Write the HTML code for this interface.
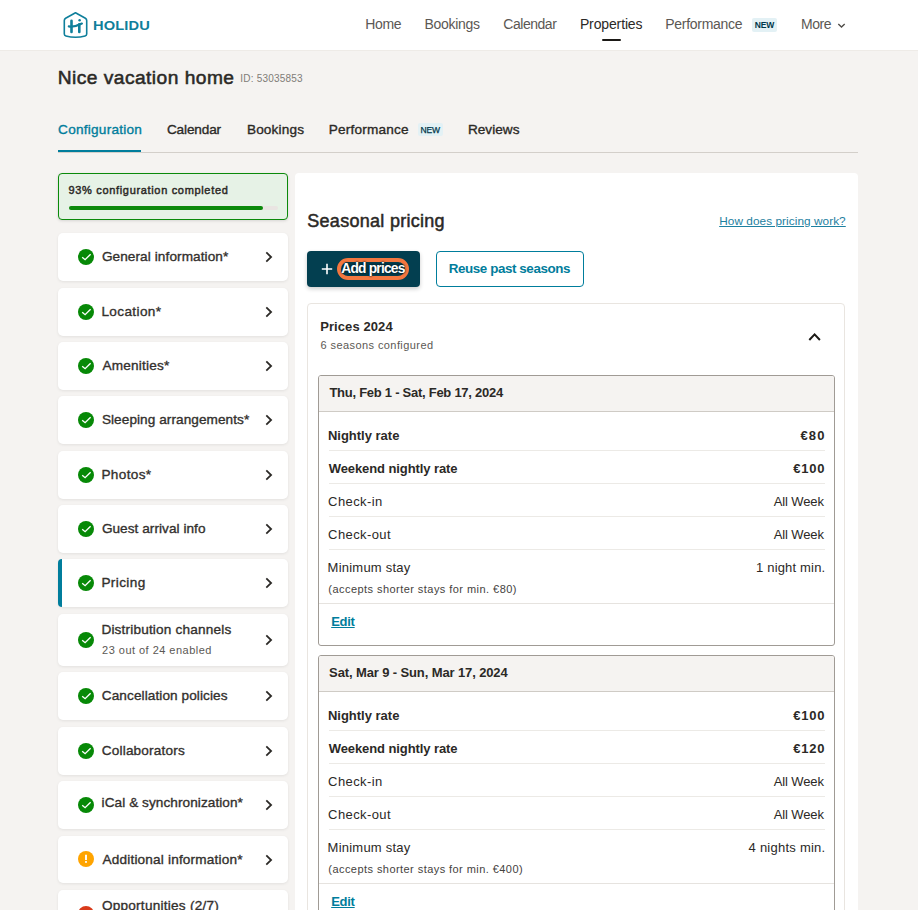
<!DOCTYPE html>
<html lang="en">
<head>
<meta charset="utf-8">
<title>Nice vacation home - Pricing</title>
<style>
*{box-sizing:border-box;margin:0;padding:0}
html,body{width:918px;height:910px;overflow:hidden}
body{background:#f5f3f1;font-family:"Liberation Sans",sans-serif;color:#2b2926;position:relative;font-size:14px}
a{color:inherit}
.abs{position:absolute;white-space:nowrap}
.md{font-weight:normal;-webkit-text-stroke:.35px currentColor;font-size:13.6px!important}
#hdr{position:absolute;left:0;top:0;width:918px;height:51px;background:#fff;border-bottom:1px solid #eeebe7}
.nav{position:absolute;top:16px;font-size:14px;line-height:16px;color:#5b5854;white-space:nowrap}
.nav.act{color:#2b2926}
.badge{position:absolute;font-size:8.5px;font-weight:bold;background:#e3f1f5;color:#00374a;border-radius:2px;text-align:center;white-space:nowrap}
#title{left:58.5px;top:66px;font-size:19.2px;line-height:24px;-webkit-text-stroke:.55px currentColor}
#pid{left:241px;top:72.5px;font-size:10px;line-height:12px;color:#807c77}
.tab{position:absolute;top:122px;font-size:14px;line-height:16px;white-space:nowrap}
#tabline{position:absolute;left:58px;top:152px;width:800px;height:1px;background:#d3cfca}
#tabact{position:absolute;left:58px;top:150px;width:83px;height:2px;background:#007d9c}
#prog{position:absolute;left:58px;top:173px;width:230px;height:47px;border:1px solid #0a8a0a;border-radius:4px;background:#e6f2e6;box-shadow:0 1px 3px rgba(0,0,0,.12)}
#prog .t{position:absolute;left:10px;top:9px;font-size:11px;line-height:14px;-webkit-text-stroke:.45px currentColor;color:#2b2926;white-space:nowrap}
#prog .bar{position:absolute;left:10px;top:32px;width:209px;height:4px;border-radius:2px;background:#e9e5e2}
#prog .bar i{display:block;width:194px;height:4px;border-radius:2px;background:#0a8a0a}
.it{position:absolute;left:58px;width:230px;background:#fff;border-radius:5px;box-shadow:0 1px 3px rgba(0,0,0,.08)}
.it .ic{position:absolute;left:20px;width:16px;height:16px}
.it .lb{position:absolute;left:44.5px;font-size:14px;line-height:16px;white-space:nowrap;color:#33302d}
.it .sb{position:absolute;left:44.5px;font-size:11px;line-height:14px;white-space:nowrap;color:#5b5854}
.it .ch{position:absolute;left:206.5px;width:8px;height:12px}
#main{position:absolute;left:295px;top:173px;width:563px;height:760px;background:#fff;border-radius:4px}
#h2{left:308px;top:210px;font-size:18px;line-height:22px;-webkit-text-stroke:.5px currentColor}
#how{left:720px;top:214px;font-size:11.8px;line-height:14px;color:#1d80a0;text-decoration:underline}
#btn1{position:absolute;left:307px;top:251px;width:113px;height:36px;border-radius:4px;background:#033f50;box-shadow:0 2px 4px rgba(0,0,0,.2)}
#btn1 svg{position:absolute;left:14.3px;top:11.5px}
#pill{position:absolute;left:30px;top:7px;width:72px;height:22px;border:4px solid #f4773f;border-radius:11px;background:#033b4b}
#btn1 .t{position:absolute;left:34.5px;top:10px;font-size:13.8px;line-height:16px;font-weight:bold;color:#fff;white-space:nowrap;text-shadow:0 0 2px #001a24,0 0 2px #001a24}
#btn2{position:absolute;left:436px;top:251px;width:148px;height:36px;border-radius:4px;background:#fff;border:1px solid #007d9c}
#btn2 .t{position:absolute;left:13px;top:9px;font-size:13.4px;line-height:16px;font-weight:bold;color:#007d9c;white-space:nowrap}
#card{position:absolute;left:307px;top:303px;width:538px;height:700px;border:1px solid #e9e5e0;border-radius:4px;background:#fff}
#ct{left:321px;top:319px;font-size:13px;line-height:16px;font-weight:bold}
#cs{left:321px;top:338px;font-size:11px;line-height:14px;color:#5b5854}
#cchev{position:absolute;left:807px;top:331px}
.sc{position:absolute;left:318px;width:517px;height:271px;border:1px solid #a09b95;border-radius:3px;background:#fff;overflow:hidden}
.sc .hd{position:absolute;left:0;top:0;width:515px;height:36px;background:#f5f3f1;border-bottom:1px solid #cfcbc5}
.sc .dt{position:absolute;left:10.5px;top:9px;font-size:13px;line-height:16px;font-weight:bold;white-space:nowrap}
.sc .l{position:absolute;left:9.7px;font-size:13px;line-height:16px;white-space:nowrap}
.sc .r{position:absolute;right:9.5px;font-size:13px;line-height:16px;white-space:nowrap;text-align:right}
.sc .b{font-weight:bold}
.sc .n{position:absolute;left:9.7px;font-size:11px;line-height:14px;white-space:nowrap;color:#45423e}
.sc .dv{position:absolute;left:9.7px;width:496px;height:1px;background:#eceae6}
.sc .fd{position:absolute;left:0;width:515px;height:1px;background:#e6e3df;top:227px}
.sc .ed{position:absolute;left:13px;top:238px;font-size:13px;line-height:16px;font-weight:bold;color:#007d9c;text-decoration:underline;white-space:nowrap}

#n1{letter-spacing:-0.34px;left:365.3px!important}
#n2{letter-spacing:-0.30px;left:424.5px!important}
#n3{letter-spacing:-0.47px;left:503.3px!important}
#n4{letter-spacing:-0.13px;left:579.9px!important}
#n5{letter-spacing:-0.27px;left:665.2px!important}
#n6{letter-spacing:-0.39px;left:800.9px!important}
#b1{letter-spacing:-0.20px;margin-right:0.20px}
#b2{letter-spacing:-0.06px;margin-right:0.06px}
#title{letter-spacing:0.46px;left:57.7px!important}
#pid{letter-spacing:0.21px;left:240.3px!important}
#t1{letter-spacing:0.24px;left:58.1px!important}
#t2{letter-spacing:-0.13px;left:166.9px!important}
#t3{letter-spacing:0.17px;left:246.9px!important}
#t4{letter-spacing:0.20px;left:328.7px!important}
#t5{letter-spacing:0.03px;left:467.9px!important}
#pt{letter-spacing:0.67px;left:9.5px!important}
#l0{letter-spacing:0.09px;left:43.9px!important}
#l1{letter-spacing:0.37px;left:43.4px!important}
#l2{letter-spacing:0.21px;left:44.5px!important}
#l3{letter-spacing:0.07px;left:43.9px!important}
#l4{letter-spacing:0.35px;left:43.4px!important}
#l5{letter-spacing:0.05px;left:43.9px!important}
#l6{letter-spacing:0.39px;left:43.4px!important}
#l7{letter-spacing:0.18px;left:43.4px!important}
#l8{letter-spacing:0.09px;left:43.8px!important}
#l9{letter-spacing:0.17px;left:43.8px!important}
#l10{letter-spacing:0.07px;left:43.6px!important}
#l11{letter-spacing:0.18px;left:44.5px!important}
#l12{letter-spacing:0.24px;left:43.9px!important}
#s7{letter-spacing:0.47px;left:44.1px!important}
#h2{letter-spacing:0.28px;left:307.3px!important}
#how{letter-spacing:0.06px;left:719.2px!important}
#apt{letter-spacing:-0.81px;left:34.3px!important}
#rpt{letter-spacing:-0.42px;left:11.8px!important}
#ct{letter-spacing:0.09px;left:320.2px!important}
#cs{letter-spacing:0.42px;left:320.5px!important}
#dt0{letter-spacing:-0.26px;left:10.4px!important}
#dt1{letter-spacing:-0.12px;left:10.1px!important}
#a0{letter-spacing:0.00px;left:8.9px!important}
#a1{letter-spacing:0.00px;left:8.9px!important}
#w0{letter-spacing:-0.09px;left:9.7px!important}
#w1{letter-spacing:-0.09px;left:9.7px!important}
#ci0{letter-spacing:0.40px;left:9.1px!important}
#ci1{letter-spacing:0.40px;left:9.1px!important}
#co0{letter-spacing:0.40px;left:9.1px!important}
#co1{letter-spacing:0.40px;left:9.1px!important}
#ms0{letter-spacing:0.23px;left:8.6px!important}
#ms1{letter-spacing:0.23px;left:8.6px!important}
#nt0{letter-spacing:0.45px;left:9.3px!important}
#nt1{letter-spacing:0.44px;left:9.3px!important}
#ed0{letter-spacing:-0.27px;left:12.2px!important}
#ed1{letter-spacing:-0.27px;left:12.2px!important}
#nv0{letter-spacing:1.20px;right:8.3px!important}
#wv0{letter-spacing:0.74px;right:8.8px!important}
#civ0{letter-spacing:-0.13px;right:10.2px!important}
#cov0{letter-spacing:-0.13px;right:10.2px!important}
#msv0{letter-spacing:0.18px;right:8.6px!important}
#nv1{letter-spacing:0.74px;right:8.8px!important}
#wv1{letter-spacing:0.74px;right:8.8px!important}
#civ1{letter-spacing:-0.13px;right:10.2px!important}
#cov1{letter-spacing:-0.13px;right:10.2px!important}
#msv1{letter-spacing:0.24px;right:8.6px!important}
</style>
</head>
<body>
<div id="hdr">
<svg class="abs" style="left:62px;top:10px" width="28" height="30" viewBox="0 0 28 30" fill="none" stroke="#0f7f9b" stroke-width="1.6" stroke-linejoin="round" stroke-linecap="round">
<path d="M13.5 2.7 L3.6 8.2 Q2.3 9 2.3 10.4 V24 Q2.3 25.6 3.9 26 Q13.5 28.4 23.1 26 Q24.7 25.6 24.7 24 V10.4 Q24.7 9 23.4 8.2 Z"/>
<path d="M9.5 10.8 V22 M17.3 14.2 V22" stroke-width="2.6"/>
<path d="M6.8 16.4 Q12.5 17.4 19.9 13.6" stroke-width="2.2"/>
<circle cx="17.6" cy="10.2" r="1.25" fill="#0f7f9b" stroke="none"/>
</svg>
<span class="abs" id="logot" style="left:93px;top:18px;font-size:12.6px;line-height:16px;font-weight:bold;color:#0f7f9b;letter-spacing:.1px;transform-origin:0 50%;transform:scaleX(1.165)">HOLIDU</span>
<span class="nav" id="n1" style="left:366.4px">Home</span>
<span class="nav" id="n2" style="left:425.4px">Bookings</span>
<span class="nav" id="n3" style="left:503.6px">Calendar</span>
<span class="nav act" id="n4" style="left:580.5px">Properties</span>
<span class="nav" id="n5" style="left:666px">Performance</span>
<span class="badge" style="left:752px;top:18px;height:13.5px;line-height:15.5px;width:25px"><span id="b1">NEW</span></span>
<span class="nav" id="n6" style="left:801.5px">More</span>
<svg class="abs" style="left:837px;top:22px" width="9" height="7" viewBox="0 0 9 7" fill="none" stroke="#4f4c48" stroke-width="1.35"><path d="M1.3 1.9 L4.5 5 L7.7 1.9"/></svg>
<div class="abs" style="left:602px;top:38.5px;width:18.5px;height:2px;background:#1b1916;border-radius:1px"></div>
</div>
<div class="abs" id="title">Nice vacation home</div>
<div class="abs" id="pid">ID: 53035853</div>
<span class="tab md" id="t1" style="left:58.5px;color:#007d9c">Configuration</span>
<span class="tab md" id="t2" style="left:167.3px">Calendar</span>
<span class="tab md" id="t3" style="left:247.6px">Bookings</span>
<span class="tab md" id="t4" style="left:329.3px">Performance</span>
<span class="badge" style="left:418px;top:123px;height:13px;line-height:15px;width:24.5px;font-weight:normal;-webkit-text-stroke:.25px currentColor"><span id="b2">NEW</span></span>
<span class="tab md" id="t5" style="left:468.6px">Reviews</span>
<div id="tabline"></div>
<div id="tabact"></div>
<div id="prog"><div class="t" id="pt">93% configuration completed</div><div class="bar"><i></i></div></div>
<div class="it" style="top:233px;height:48px"><svg class="ic" style="top:16px" viewBox="0 0 16 16"><circle cx="8" cy="8" r="8" fill="#078907"/><path d="M4.2 8.2 L7.1 10.7 L12.6 5.2" fill="none" stroke="#fff" stroke-width="1.35"/></svg><div class="lb md" id="l0" style="top:16px">General information*</div><svg class="ch" style="top:18.2px" viewBox="0 0 8 12" fill="none" stroke="#2b2926" stroke-width="1.75"><path d="M1.3 1.4 L6.1 6 L1.3 10.6"/></svg></div>
<div class="it" style="top:288px;height:48px"><svg class="ic" style="top:16px" viewBox="0 0 16 16"><circle cx="8" cy="8" r="8" fill="#078907"/><path d="M4.2 8.2 L7.1 10.7 L12.6 5.2" fill="none" stroke="#fff" stroke-width="1.35"/></svg><div class="lb md" id="l1" style="top:16px">Location*</div><svg class="ch" style="top:18.2px" viewBox="0 0 8 12" fill="none" stroke="#2b2926" stroke-width="1.75"><path d="M1.3 1.4 L6.1 6 L1.3 10.6"/></svg></div>
<div class="it" style="top:342px;height:48px"><svg class="ic" style="top:16px" viewBox="0 0 16 16"><circle cx="8" cy="8" r="8" fill="#078907"/><path d="M4.2 8.2 L7.1 10.7 L12.6 5.2" fill="none" stroke="#fff" stroke-width="1.35"/></svg><div class="lb md" id="l2" style="top:16px">Amenities*</div><svg class="ch" style="top:18.2px" viewBox="0 0 8 12" fill="none" stroke="#2b2926" stroke-width="1.75"><path d="M1.3 1.4 L6.1 6 L1.3 10.6"/></svg></div>
<div class="it" style="top:396px;height:48px"><svg class="ic" style="top:16px" viewBox="0 0 16 16"><circle cx="8" cy="8" r="8" fill="#078907"/><path d="M4.2 8.2 L7.1 10.7 L12.6 5.2" fill="none" stroke="#fff" stroke-width="1.35"/></svg><div class="lb md" id="l3" style="top:16px">Sleeping arrangements*</div><svg class="ch" style="top:18.4px" viewBox="0 0 8 12" fill="none" stroke="#2b2926" stroke-width="1.75"><path d="M1.3 1.4 L6.1 6 L1.3 10.6"/></svg></div>
<div class="it" style="top:451px;height:48px"><svg class="ic" style="top:16px" viewBox="0 0 16 16"><circle cx="8" cy="8" r="8" fill="#078907"/><path d="M4.2 8.2 L7.1 10.7 L12.6 5.2" fill="none" stroke="#fff" stroke-width="1.35"/></svg><div class="lb md" id="l4" style="top:16px">Photos*</div><svg class="ch" style="top:18.2px" viewBox="0 0 8 12" fill="none" stroke="#2b2926" stroke-width="1.75"><path d="M1.3 1.4 L6.1 6 L1.3 10.6"/></svg></div>
<div class="it" style="top:505px;height:48px"><svg class="ic" style="top:16px" viewBox="0 0 16 16"><circle cx="8" cy="8" r="8" fill="#078907"/><path d="M4.2 8.2 L7.1 10.7 L12.6 5.2" fill="none" stroke="#fff" stroke-width="1.35"/></svg><div class="lb md" id="l5" style="top:16px">Guest arrival info</div><svg class="ch" style="top:18.2px" viewBox="0 0 8 12" fill="none" stroke="#2b2926" stroke-width="1.75"><path d="M1.3 1.4 L6.1 6 L1.3 10.6"/></svg></div>
<div class="it" style="top:559px;height:48px"><div style="position:absolute;left:0;top:0;width:4px;height:100%;background:#007d9c;border-radius:5px 0 0 5px"></div><svg class="ic" style="top:16px" viewBox="0 0 16 16"><circle cx="8" cy="8" r="8" fill="#078907"/><path d="M4.2 8.2 L7.1 10.7 L12.6 5.2" fill="none" stroke="#fff" stroke-width="1.35"/></svg><div class="lb md" id="l6" style="top:16px">Pricing</div><svg class="ch" style="top:18.3px" viewBox="0 0 8 12" fill="none" stroke="#2b2926" stroke-width="1.75"><path d="M1.3 1.4 L6.1 6 L1.3 10.6"/></svg></div>
<div class="it" style="top:614px;height:52px"><svg class="ic" style="top:18px" viewBox="0 0 16 16"><circle cx="8" cy="8" r="8" fill="#078907"/><path d="M4.2 8.2 L7.1 10.7 L12.6 5.2" fill="none" stroke="#fff" stroke-width="1.35"/></svg><div class="lb md" id="l7" style="top:8px">Distribution channels</div><div class="sb" id="s7" style="top:29px">23 out of 24 enabled</div><svg class="ch" style="top:20.1px" viewBox="0 0 8 12" fill="none" stroke="#2b2926" stroke-width="1.75"><path d="M1.3 1.4 L6.1 6 L1.3 10.6"/></svg></div>
<div class="it" style="top:672px;height:48px"><svg class="ic" style="top:16px" viewBox="0 0 16 16"><circle cx="8" cy="8" r="8" fill="#078907"/><path d="M4.2 8.2 L7.1 10.7 L12.6 5.2" fill="none" stroke="#fff" stroke-width="1.35"/></svg><div class="lb md" id="l8" style="top:16px">Cancellation policies</div><svg class="ch" style="top:18.3px" viewBox="0 0 8 12" fill="none" stroke="#2b2926" stroke-width="1.75"><path d="M1.3 1.4 L6.1 6 L1.3 10.6"/></svg></div>
<div class="it" style="top:727px;height:48px"><svg class="ic" style="top:16px" viewBox="0 0 16 16"><circle cx="8" cy="8" r="8" fill="#078907"/><path d="M4.2 8.2 L7.1 10.7 L12.6 5.2" fill="none" stroke="#fff" stroke-width="1.35"/></svg><div class="lb md" id="l9" style="top:16px">Collaborators</div><svg class="ch" style="top:18.0px" viewBox="0 0 8 12" fill="none" stroke="#2b2926" stroke-width="1.75"><path d="M1.3 1.4 L6.1 6 L1.3 10.6"/></svg></div>
<div class="it" style="top:781px;height:48px"><svg class="ic" style="top:16px" viewBox="0 0 16 16"><circle cx="8" cy="8" r="8" fill="#078907"/><path d="M4.2 8.2 L7.1 10.7 L12.6 5.2" fill="none" stroke="#fff" stroke-width="1.35"/></svg><div class="lb md" id="l10" style="top:14px">iCal &amp; synchronization*</div><svg class="ch" style="top:18.4px" viewBox="0 0 8 12" fill="none" stroke="#2b2926" stroke-width="1.75"><path d="M1.3 1.4 L6.1 6 L1.3 10.6"/></svg></div>
<div class="it" style="top:836px;height:47px"><svg class="ic" style="top:15px" viewBox="0 0 16 16"><circle cx="8" cy="8" r="8" fill="#ffa400"/><path d="M8 3.8 V9" fill="none" stroke="#fff" stroke-width="1.9"/><rect x="7.05" y="10.1" width="1.9" height="1.7" fill="#fff"/></svg><div class="lb md" id="l11" style="top:16px">Additional information*</div><svg class="ch" style="top:17.6px" viewBox="0 0 8 12" fill="none" stroke="#2b2926" stroke-width="1.75"><path d="M1.3 1.4 L6.1 6 L1.3 10.6"/></svg></div>
<div class="it" style="top:890px;height:52px"><svg class="ic" style="top:16px" viewBox="0 0 16 16"><circle cx="8" cy="8" r="8" fill="#d93a1a"/></svg><div class="lb md" id="l12" style="top:8px">Opportunities (2/7)</div><div class="sb" id="s12" style="top:29px">&nbsp;</div><svg class="ch" style="top:20.5px" viewBox="0 0 8 12" fill="none" stroke="#2b2926" stroke-width="1.75"><path d="M1.3 1.4 L6.1 6 L1.3 10.6"/></svg></div>
<div id="main"></div>
<div class="abs" id="h2">Seasonal pricing</div>
<a class="abs" id="how">How does pricing work?</a>
<div id="btn1"><svg width="12" height="12" viewBox="0 0 12 12" stroke="#fff" stroke-width="1.6" fill="none"><path d="M6 0.8 V11.2 M0.8 6 H11.2"/></svg><div id="pill"></div><div class="t" id="apt">Add prices</div></div>
<div id="btn2"><div class="t" id="rpt">Reuse past seasons</div></div>
<div id="card"></div>
<div class="abs" id="ct">Prices 2024</div>
<div class="abs" id="cs">6 seasons configured</div>
<svg id="cchev" width="15" height="11" viewBox="0 0 15 11" fill="none" stroke="#1b1916" stroke-width="2"><path d="M2.3 9 L7.6 3.4 L12.9 9"/></svg>
<div class="sc" style="top:375px">
<div class="hd"><div class="dt" id="dt0">Thu, Feb 1 - Sat, Feb 17, 2024</div></div>
<div class="l b" id="a0" style="top:51.5px">Nightly rate</div><div class="r b" id="nv0" style="top:51.5px">€80</div>
<div class="dv" style="top:74px"></div>
<div class="l b" id="w0" style="top:84.5px">Weekend nightly rate</div><div class="r b" id="wv0" style="top:84.5px">€100</div>
<div class="dv" style="top:107px"></div>
<div class="l" id="ci0" style="top:117.5px">Check-in</div><div class="r" id="civ0" style="top:117.5px">All Week</div>
<div class="dv" style="top:140px"></div>
<div class="l" id="co0" style="top:150.5px">Check-out</div><div class="r" id="cov0" style="top:150.5px">All Week</div>
<div class="dv" style="top:173px"></div>
<div class="l" id="ms0" style="top:183.5px">Minimum stay</div><div class="r" id="msv0" style="top:183.5px">1 night min.</div>
<div class="n" id="nt0" style="top:206px">(accepts shorter stays for min. €80)</div>
<div class="fd"></div>
<a class="ed" id="ed0">Edit</a>
</div>
<div class="sc" style="top:655px">
<div class="hd"><div class="dt" id="dt1">Sat, Mar 9 - Sun, Mar 17, 2024</div></div>
<div class="l b" id="a1" style="top:51.5px">Nightly rate</div><div class="r b" id="nv1" style="top:51.5px">€100</div>
<div class="dv" style="top:74px"></div>
<div class="l b" id="w1" style="top:84.5px">Weekend nightly rate</div><div class="r b" id="wv1" style="top:84.5px">€120</div>
<div class="dv" style="top:107px"></div>
<div class="l" id="ci1" style="top:117.5px">Check-in</div><div class="r" id="civ1" style="top:117.5px">All Week</div>
<div class="dv" style="top:140px"></div>
<div class="l" id="co1" style="top:150.5px">Check-out</div><div class="r" id="cov1" style="top:150.5px">All Week</div>
<div class="dv" style="top:173px"></div>
<div class="l" id="ms1" style="top:183.5px">Minimum stay</div><div class="r" id="msv1" style="top:183.5px">4 nights min.</div>
<div class="n" id="nt1" style="top:206px">(accepts shorter stays for min. €400)</div>
<div class="fd"></div>
<a class="ed" id="ed1">Edit</a>
</div>
</body>
</html>
